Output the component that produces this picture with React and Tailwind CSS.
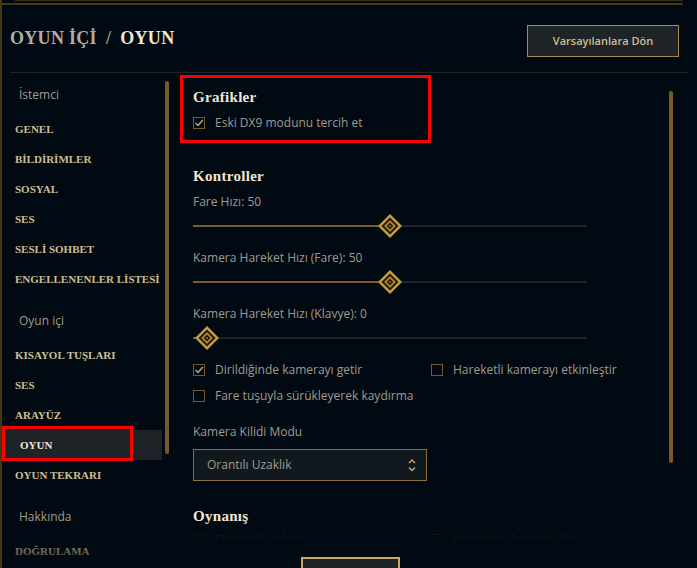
import clsx from "clsx";

const clientItems = ["GENEL", "BİLDİRİMLER", "SOSYAL", "SES", "SESLİ SOHBET", "ENGELLENENLER LİSTESİ"];
const gameItems = ["KISAYOL TUŞLARI", "SES", "ARAYÜZ", "OYUN", "OYUN TEKRARI"];

function GroupLabel({ children, className }) {
  return (
    <div className={clsx("flex h-[30px] items-center pl-[17px] text-[12px] text-[#a09b8c]", className)}>
      {children}
    </div>
  );
}

function NavItem({ label, active }) {
  return (
    <div
      className={clsx(
        "relative ml-[3px] flex h-[30px] w-[157px] items-center whitespace-nowrap font-['Liberation_Serif',serif] text-[11px] font-bold",
        active ? "bg-[#1e2328] pl-[15px] text-[#f0e6d2]" : "pl-[10px] text-[#cdbe91]"
      )}
    >
      {label}
      {active && (
        <div className="pointer-events-none absolute left-[-3px] top-[-4px] h-[35px] w-[131px] border-[3px] border-[#ff0000]" />
      )}
    </div>
  );
}

function Checkbox({ checked, label }) {
  return (
    <div className="flex h-[20px] items-center gap-[10px]">
      <div className="flex h-[12px] w-[12px] items-center justify-center border border-[#785a28]">
        {checked && (
          <svg width="10" height="10" viewBox="0 0 10 10">
            <path d="M1.5 5 L4 7.5 L8.8 2" fill="none" stroke="#c8aa6e" strokeWidth="1.4" />
          </svg>
        )}
      </div>
      <span className="whitespace-nowrap text-[12px] text-[#a09b8c]">{label}</span>
    </div>
  );
}

function Knob({ left }) {
  return (
    <svg className="absolute top-0" style={{ left }} width="24" height="24" viewBox="0 0 24 24">
      <polygon points="12,0 24,12 12,24 0,12" fill="#c89b3c" />
      <polygon points="12,3.5 20.5,12 12,20.5 3.5,12" fill="#1a1408" />
      <polygon points="12,6 18,12 12,18 6,12" fill="#a8832f" />
      <polygon points="12,8.8 15.2,12 12,15.2 8.8,12" fill="#1a1408" />
      <circle cx="12" cy="12" r="1" fill="#a8832f" />
    </svg>
  );
}

function Slider({ value }) {
  const left = 14 + (value / 100) * 366 - 12;
  return (
    <div className="relative mt-[4px] h-[24px] w-[394px]">
      <div className="absolute left-0 right-0 top-[11px] h-[2px] bg-[#1e2328]" />
      <div className="absolute left-0 top-[11px] h-[2px] bg-[#7d5e2a]" style={{ width: left + 12 }} />
      <Knob left={left} />
    </div>
  );
}

function Label({ children, className }) {
  return <div className={clsx("flex h-[16px] items-center text-[12px] text-[#a09b8c]", className)}>{children}</div>;
}

function Heading({ children, className }) {
  return (
    <div className={clsx("flex h-[20px] items-center font-['Liberation_Serif',serif] text-[15px] font-bold tracking-[0.3px] text-[#f0e6d2]", className)}>
      {children}
    </div>
  );
}

export default function App() {
  return (
    <div className="relative h-[568px] w-[697px] overflow-hidden border-l-2 border-[#463714] bg-[#010a13] font-['Open_Sans',sans-serif]">
      {/* ust cerceve */}
      <div className="h-[5px]">
        <div className="ml-[13px] mr-[14px] h-px bg-[#3a2d12]" />
        <div className="mr-[14px] mt-[2px] h-[2px] bg-[#463714]" />
      </div>

      <div className="flex h-[67px] justify-between pl-[8px] pr-[18px]">
        <div className="flex items-center font-['Liberation_Serif',serif] text-[18px] font-bold tracking-[0.3px]">
          <span className="text-[#b3ad9e]">OYUN İÇİ</span>
          <span className="mx-[9px] text-[#a09b8c]">/</span>
          <span className="text-[#f0e6d2]">OYUN</span>
        </div>
        <button className="mt-[20px] flex h-[32px] w-[152px] items-center justify-center border border-[#a88a4e] bg-[#1e2328] text-[11px] font-semibold text-[#cdbe91]">
          Varsayılanlara Dön
        </button>
      </div>

      <div className="ml-[8px] mr-[9px] h-px bg-[#1e2328]" />

      <div className="flex h-[495px]">
        {/* sol menu */}
        <div className="relative w-[163px] pt-[7px]">
          <GroupLabel className="mb-[4px]">İstemci</GroupLabel>
          {clientItems.map((l) => (
            <NavItem key={l} label={l} />
          ))}
          <GroupLabel className="mb-[4px] mt-[12px]">Oyun içi</GroupLabel>
          {gameItems.map((l) => (
            <NavItem key={l + "g"} label={l} active={l === "OYUN"} />
          ))}
          <GroupLabel className="mb-[4px] mt-[12px]">Hakkında</GroupLabel>
          <NavItem label="DOĞRULAMA" />
          <div className="pointer-events-none absolute bottom-0 left-0 right-0 h-[40px] bg-gradient-to-b from-transparent to-[#010a13]/80" />
        </div>
        <div className="mt-[8px] h-[373px] w-[4px] rounded-sm bg-[#785a28]" />

        {/* icerik */}
        <div className="relative h-[468px] flex-1 overflow-hidden pl-[11px] pt-[2px]">
          <div className="h-[68px] w-[251px] border-[3px] border-[#ff0000] pl-[10px] pt-[9px]">
            <Heading>Grafikler</Heading>
            <div className="mt-[6px]">
              <Checkbox checked label="Eski DX9 modunu tercih et" />
            </div>
          </div>

          <div className="pl-[13px]">
            <Heading className="mt-[23px]">Kontroller</Heading>
            <Label className="mt-[8px]">Fare Hızı: 50</Label>
            <Slider value={50} />
            <Label className="mt-[12px]">Kamera Hareket Hızı (Fare): 50</Label>
            <Slider value={50} />
            <Label className="mt-[12px]">Kamera Hareket Hızı (Klavye): 0</Label>
            <Slider value={0} />

            <div className="mt-[10px] grid grid-cols-[238px_1fr] gap-y-[6px]">
              <Checkbox checked label="Dirildiğinde kamerayı getir" />
              <Checkbox label="Hareketli kamerayı etkinleştir" />
              <Checkbox label="Fare tuşuyla sürükleyerek kaydırma" />
            </div>

            <Label className="mt-[18px]">Kamera Kilidi Modu</Label>
            <div className="mt-[9px] flex h-[32px] w-[234px] items-center justify-between border border-[#8c6f3c] bg-[#11181e] pl-[13px] pr-[10px]">
              <span className="text-[12px] text-[#a09b8c]">Orantılı Uzaklık</span>
              <svg width="8" height="13" viewBox="0 0 8 13">
                <path d="M1 4 L4 1 L7 4" fill="none" stroke="#c8aa6e" strokeWidth="1.4" />
                <path d="M1 8.5 L4 11.5 L7 8.5" fill="none" stroke="#c8aa6e" strokeWidth="1.4" />
              </svg>
            </div>

            <Heading className="mt-[25px]">Oynanış</Heading>
            <div className="mt-[4px] grid grid-cols-[238px_1fr]">
              <Checkbox label="Otomatik saldırı" />
              <Checkbox label="Hareket tahmini kullan" />
            </div>
          </div>

          <div className="pointer-events-none absolute bottom-0 left-0 right-0 h-[14px] bg-gradient-to-b from-[#010a13]/75 to-[#010a13]" />
        </div>
        <div className="mr-[24px] mt-[18px] h-[372px] w-[4px] rounded-sm bg-[#785a28]" />
      </div>

      <div className="absolute left-[299px] top-[557px] h-[32px] w-[99px] border-2 border-[#c8aa6e] bg-[#1e2328]" />
    </div>
  );
}
